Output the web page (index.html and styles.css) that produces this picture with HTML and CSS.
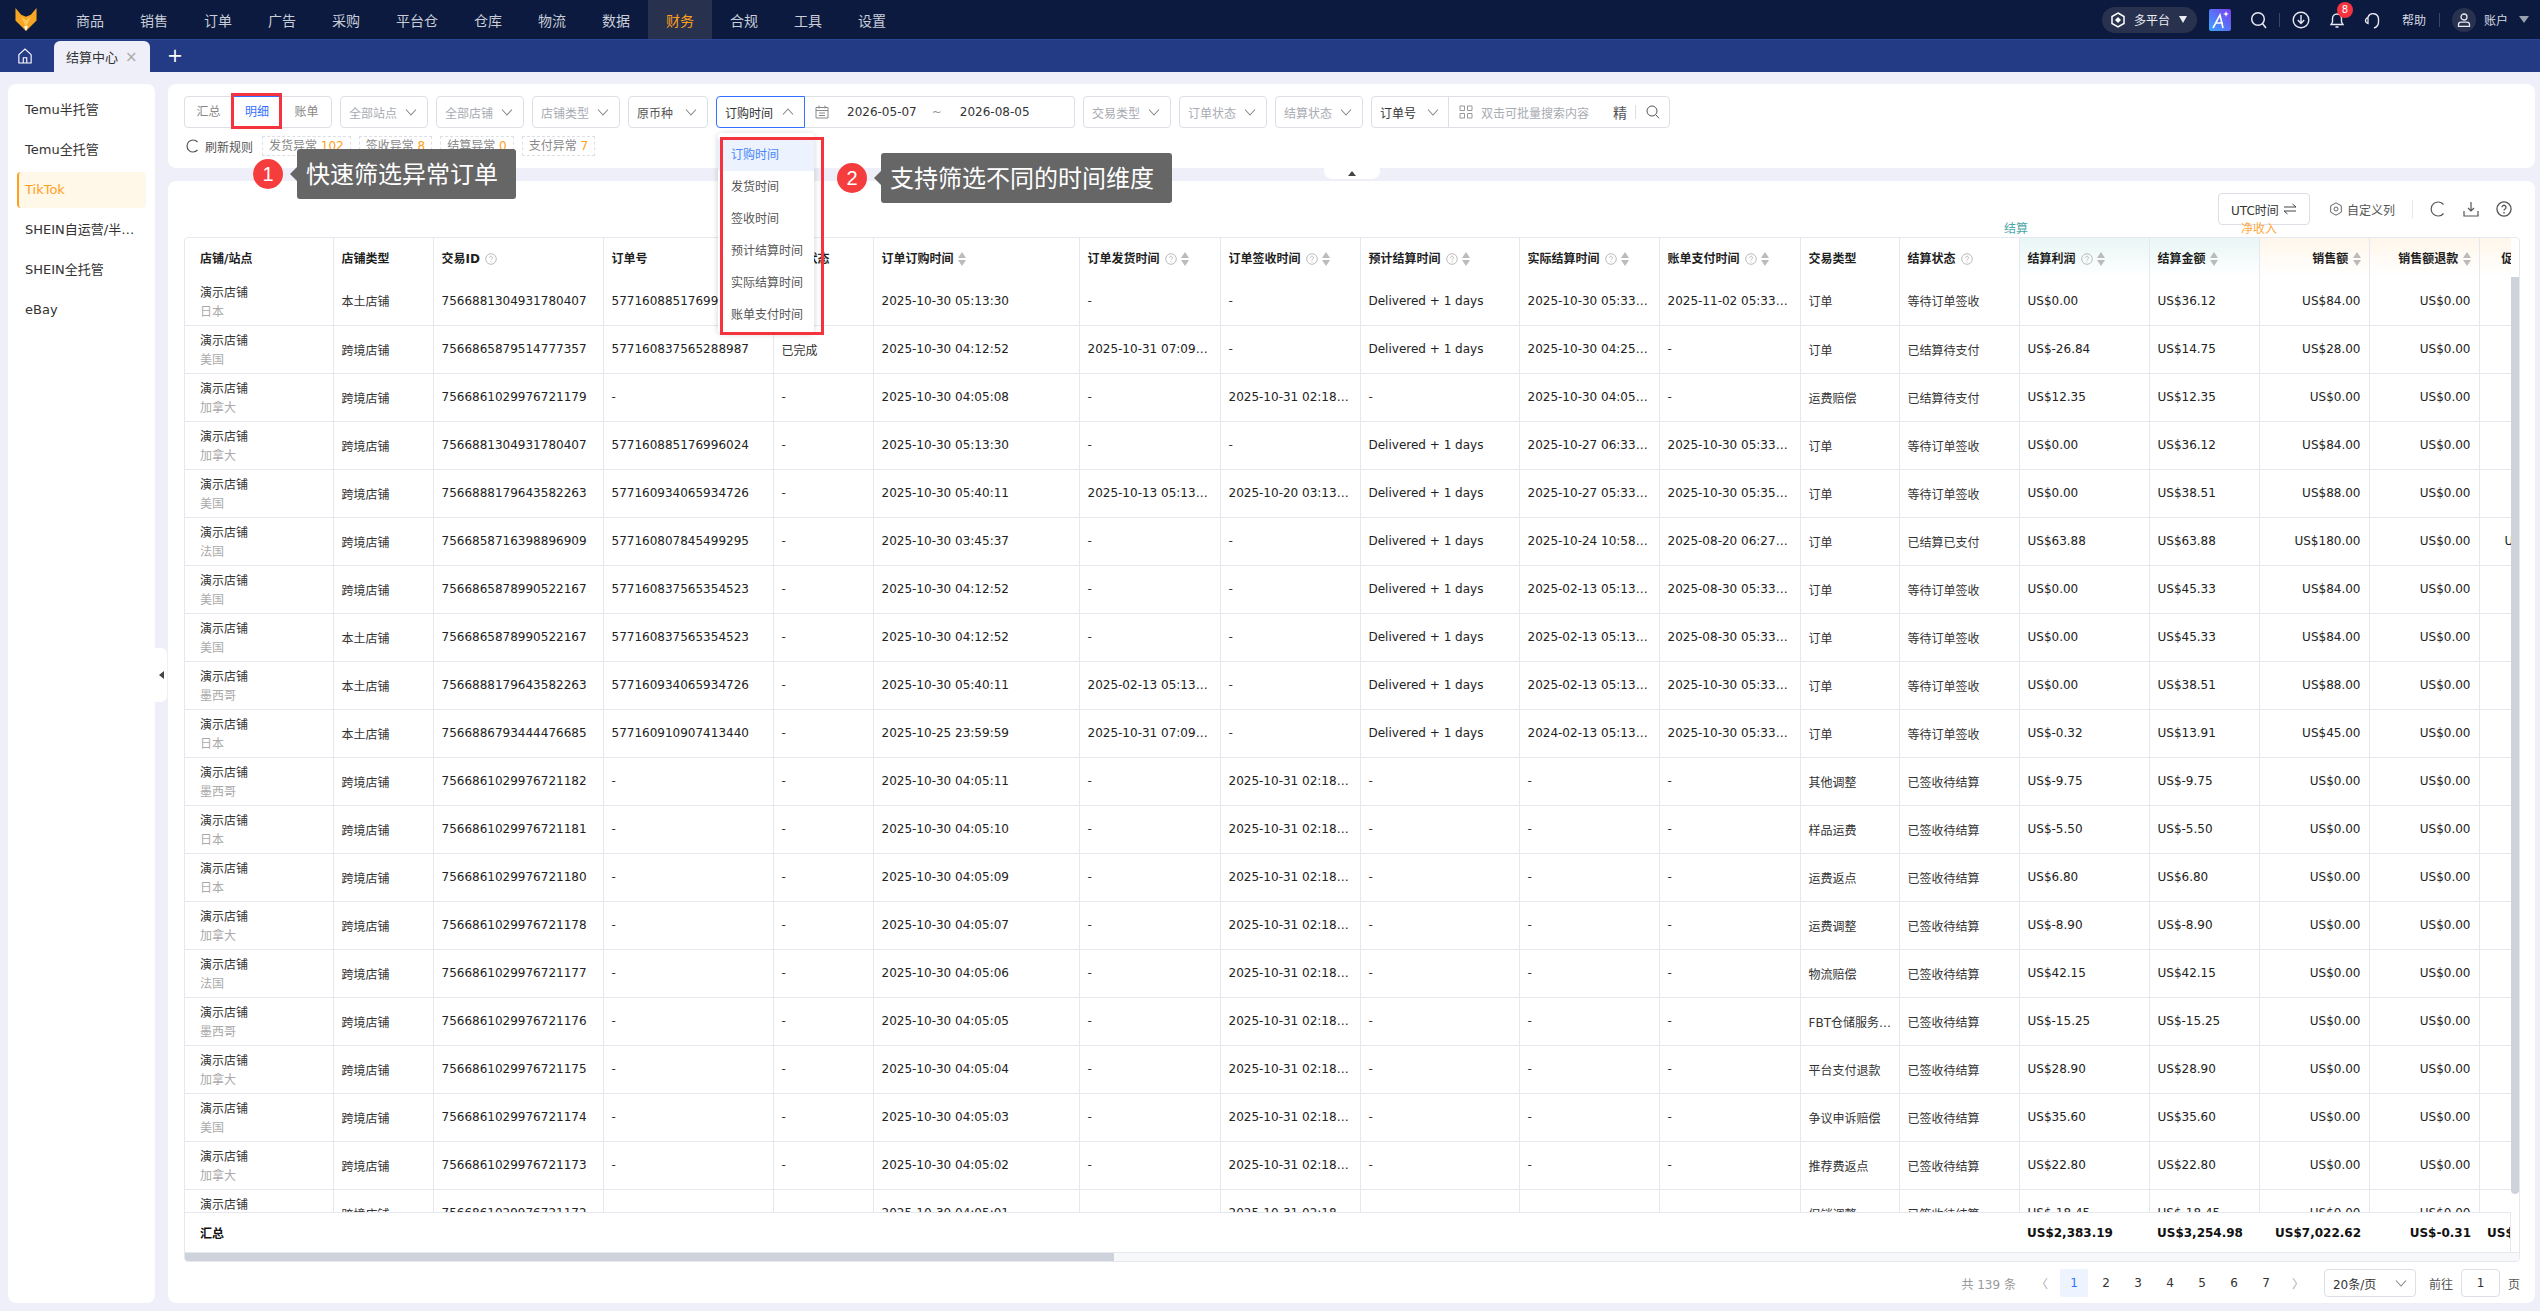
FILE: index.html
```html
<!DOCTYPE html>
<html lang="zh-CN">
<head>
    <meta charset="UTF-8">
    <meta name="viewport" content="width=device-width, initial-scale=1.0">
    <title>结算中心</title>
    <link rel="stylesheet" href="styles.css">
</head>
<body>
    <svg class="sprite" aria-hidden="true">
        <symbol id="i-chev" viewBox="0 0 12 12"><path d="M1 3.5 6 9l5-5.500" fill="none" stroke="currentColor" stroke-width="1.100"/></symbol>
        <symbol id="i-help" viewBox="0 0 12 12"><circle cx="6" cy="6" r="5.300" fill="none" stroke="currentColor"/><path d="M4.500 4.700a1.500 1.500 0 1 1 2.300 1.300c-.5.300-.8.600-.8 1.200M6 8.300v1" fill="none" stroke="currentColor"/></symbol>
        <symbol id="i-sort" viewBox="0 0 8 14"><path d="M4 0l4 6H0zM4 14 0 8h8z" fill="currentColor"/></symbol>
    </svg>

    <!-- top navigation -->
    <header class="topnav">
        <svg class="logo" viewBox="0 0 22 24"><path d="M0 0l6 7 5 2 5-2 6-7v13L11 24 0 13z" fill="#f6a623"/><path d="M6 9l5 4 5-4-5 11z" fill="#ffc65c"/><path d="M9 19h4l-2 5z" fill="#fff"/></svg>
        <nav class="nav-list">
            <a class="nav-item">商品</a>
            <a class="nav-item">销售</a>
            <a class="nav-item">订单</a>
            <a class="nav-item">广告</a>
            <a class="nav-item">采购</a>
            <a class="nav-item">平台仓</a>
            <a class="nav-item">仓库</a>
            <a class="nav-item">物流</a>
            <a class="nav-item">数据</a>
            <a class="nav-item nav-active">财务</a>
            <a class="nav-item">合规</a>
            <a class="nav-item">工具</a>
            <a class="nav-item">设置</a>
        </nav>
        <div class="nav-right">
            <div class="platform-pill">
                <svg class="icon-16" viewBox="0 0 16 16"><path d="M8 1l6 3.500v7L8 15l-6-3.500v-7z" fill="none" stroke="#fff" stroke-width="1.500"/><path d="M8 5l3 3-3 3-3-3z" fill="#fff"/></svg>
                <span>多平台</span>
                <i class="tri-down"></i>
            </div>
            <svg class="ai-logo" viewBox="0 0 22 22"><defs><linearGradient id="ai-grad" x1="0" y1="1" x2="1" y2="0"><stop offset="0" stop-color="#38a6ff"/><stop offset="1" stop-color="#7a3df0"/></linearGradient></defs><rect width="22" height="22" rx="2" fill="url(#ai-grad)"/><path d="M4 19 11 6l3 13M7 14h7" fill="none" stroke="#fff" stroke-width="1.600"/><path d="M17 2l.8 2.200L20 5l-2.200.8L17 8l-.8-2.200L14 5l2.200-.8z" fill="#fff"/></svg>
            <svg class="icon-18 search-top" viewBox="0 0 18 18"><circle cx="8" cy="8" r="6.300" fill="none" stroke="#e8eaf0" stroke-width="1.500"/><path d="M12.500 12.500 16 17" stroke="#e8eaf0" stroke-width="1.500"/></svg>
            <i class="nav-sep"></i>
            <svg class="icon-18 download-top" viewBox="0 0 18 18"><circle cx="9" cy="9" r="7.800" fill="none" stroke="#e8eaf0" stroke-width="1.400"/><path d="M9 4v8M5.800 9 9 12.500 12.200 9" fill="none" stroke="#e8eaf0" stroke-width="1.400"/></svg>
            <div class="bell">
                <svg class="icon-18" viewBox="0 0 18 18"><path d="M3 13.500h12l-1.500-2.500V7.500a4.500 4.500 0 0 0-9 0V11zM7.500 16h3" fill="none" stroke="#e8eaf0" stroke-width="1.400"/></svg>
                <span class="bell-badge">8</span>
            </div>
            <svg class="icon-18 headset" viewBox="0 0 18 18"><path d="M4 6a5.500 5.500 0 0 1 10.500 1.500v3.500c0 3-1.500 5-4.500 6" fill="none" stroke="#e8eaf0" stroke-width="1.400"/><path d="M4 6.500c-1.500.5-2.500 1.500-2.500 3s1 2.500 2.500 3z" fill="none" stroke="#e8eaf0" stroke-width="1.300"/></svg>
            <span class="help-link">帮助</span>
            <i class="nav-sep sep-help"></i>
            <span class="avatar"><svg class="icon-14" viewBox="0 0 14 14"><circle cx="7" cy="4" r="3" fill="none" stroke="#e8eaf0" stroke-width="1.300"/><path d="M1.500 13.300V11.500c0-1.500 1-2.300 2.500-2.300h6c1.500 0 2.500.8 2.500 2.300v1.800z" fill="none" stroke="#e8eaf0" stroke-width="1.300"/></svg></span>
            <span class="account-name">账户</span>
            <i class="tri-down tri-gray"></i>
        </div>
    </header>

    <!-- page tabs -->
    <div class="tabbar">
        <svg class="home-icon" viewBox="0 0 16 18"><path d="M1 7.500 8 1l7 6.500V17H1zM6 17v-6h4v6" fill="none" stroke="#fff" stroke-width="1.300"/></svg>
        <div class="tab">结算中心<span class="tab-close">×</span></div>
        <span class="tab-add">+</span>
    </div>

    <div class="layout">
        <aside class="side">
            <a class="side-item">Temu半托管</a>
            <a class="side-item">Temu全托管</a>
            <a class="side-item side-active">TikTok</a>
            <a class="side-item">SHEIN自运营/半托管</a>
            <a class="side-item">SHEIN全托管</a>
            <a class="side-item">eBay</a>
        </aside>

        <main class="main">
            <section class="filters">
                <div class="filter-row">
                    <div class="seg">
                        <span class="seg-item">汇总</span>
                        <span class="seg-item seg-on">明细</span>
                        <span class="seg-item seg-last">账单</span>
                    </div>
                    <div class="sel">全部站点<svg class="chev"><use href="#i-chev"/></svg></div>
                    <div class="sel">全部店铺<svg class="chev"><use href="#i-chev"/></svg></div>
                    <div class="sel">店铺类型<svg class="chev"><use href="#i-chev"/></svg></div>
                    <div class="sel sel-cur">原币种<svg class="chev"><use href="#i-chev"/></svg></div>
                    <div class="date-group">
                        <div class="sel sel-time">订购时间<svg class="chev chev-up"><use href="#i-chev"/></svg></div>
                        <div class="date-box">
                            <svg class="icon-14" viewBox="0 0 14 14"><path d="M1 2.500h12V13H1zM1 5.500h12M4 .5v3M10 .5v3M4 8h6M4 10.500h6" fill="none" stroke="#888" stroke-width="1"/></svg>
                            <span class="date-val">2026-05-07</span>
                            <span class="date-tilde">~</span>
                            <span class="date-val">2026-08-05</span>
                        </div>
                    </div>
                    <div class="sel">交易类型<svg class="chev"><use href="#i-chev"/></svg></div>
                    <div class="sel">订单状态<svg class="chev"><use href="#i-chev"/></svg></div>
                    <div class="sel">结算状态<svg class="chev"><use href="#i-chev"/></svg></div>
                    <div class="search-group">
                        <div class="search-type">订单号<svg class="chev"><use href="#i-chev"/></svg></div>
                        <div class="search-input">
                            <svg class="icon-14" viewBox="0 0 14 14"><path d="M1 1h4.500v4.500H1zM8.500 1H13v4.500H8.500zM1 8.500h4.500V13H1zM8.500 8.500H13V13H8.500z" fill="none" stroke="#999"/></svg>
                            <span class="search-hint">双击可批量搜索内容</span>
                            <span class="search-exact">精</span>
                            <i class="search-sep"></i>
                            <svg class="icon-14" viewBox="0 0 14 14"><circle cx="6" cy="6" r="5" fill="none" stroke="#555"/><path d="M9.700 9.700 13 13.300" stroke="#555"/></svg>
                        </div>
                    </div>
                </div>
                <div class="rule-row">
                    <svg class="icon-14 rule-icon" viewBox="0 0 14 14"><path d="M11.500 3A6 6 0 1 0 11.500 11" fill="none" stroke="#555" stroke-width="1.200"/></svg>
                    <span class="rule-text">刷新规则</span>
                    <span class="tag">发货异常 <b>102</b></span>
                    <span class="tag">签收异常 <b>8</b></span>
                    <span class="tag">结算异常 <b>0</b></span>
                    <span class="tag">支付异常 <b>7</b></span>
                </div>
            </section>

            <section class="table-panel">
                <div class="table-tools">
                    <button class="utc-btn">UTC时间 <svg class="icon-14" viewBox="0 0 14 14"><path d="M1 5h12L9.500 2M13 9H1l3.500 3" fill="none" stroke="#444"/></svg></button>
                    <span class="col-setting"><svg class="icon-14" viewBox="0 0 14 14"><path d="M7 .8l5.300 3v6.400L7 13.200l-5.300-3V3.800z" fill="none" stroke="#666"/><circle cx="7" cy="7" r="2" fill="none" stroke="#666"/></svg>自定义列</span>
                    <i class="tool-sep"></i>
                    <svg class="icon-16" viewBox="0 0 16 16"><path d="M13.500 3.500a7 7 0 1 0 0 9" fill="none" stroke="#555" stroke-width="1.200"/></svg>
                    <svg class="icon-16" viewBox="0 0 16 16"><path d="M8 1v9M5 7l3 3 3-3M1 10v5h14v-5" fill="none" stroke="#555" stroke-width="1.200"/></svg>
                    <svg class="icon-16" viewBox="0 0 12 12"><use href="#i-help" class="tool-help"/></svg>
                </div>
                <div class="group-labels">
                    <span class="group-settle">结算</span>
                    <span class="group-income">净收入</span>
                </div>
                <div class="table-box">
                    <div class="head-clip">
                        <table class="grid">
                            <colgroup><col><col><col><col><col><col><col><col><col><col><col><col><col><col><col><col><col><col></colgroup>
                            <thead>
                                <tr>
                                    <th>店铺/站点</th>
                                    <th>店铺类型</th>
                                    <th>交易ID <svg class="help"><use href="#i-help"/></svg></th>
                                    <th>订单号</th>
                                    <th>订单状态</th>
                                    <th>订单订购时间 <svg class="sort"><use href="#i-sort"/></svg></th>
                                    <th>订单发货时间 <svg class="help"><use href="#i-help"/></svg> <svg class="sort"><use href="#i-sort"/></svg></th>
                                    <th>订单签收时间 <svg class="help"><use href="#i-help"/></svg> <svg class="sort"><use href="#i-sort"/></svg></th>
                                    <th>预计结算时间 <svg class="help"><use href="#i-help"/></svg> <svg class="sort"><use href="#i-sort"/></svg></th>
                                    <th>实际结算时间 <svg class="help"><use href="#i-help"/></svg> <svg class="sort"><use href="#i-sort"/></svg></th>
                                    <th>账单支付时间 <svg class="help"><use href="#i-help"/></svg> <svg class="sort"><use href="#i-sort"/></svg></th>
                                    <th>交易类型</th>
                                    <th>结算状态 <svg class="help"><use href="#i-help"/></svg></th>
                                    <th class="th-teal">结算利润 <svg class="help"><use href="#i-help"/></svg> <svg class="sort"><use href="#i-sort"/></svg></th>
                                    <th class="th-teal">结算金额 <svg class="sort"><use href="#i-sort"/></svg></th>
                                    <th class="th-orange r">销售额 <svg class="sort"><use href="#i-sort"/></svg></th>
                                    <th class="th-orange r">销售额退款 <svg class="sort"><use href="#i-sort"/></svg></th>
                                    <th class="th-orange r">促销折扣 <svg class="sort"><use href="#i-sort"/></svg></th>
                                </tr>
                            </thead>
                        </table>
                    </div>
                    <div class="body-wrap">
                        <div class="body-clip">
                            <table class="grid">
                                <colgroup><col><col><col><col><col><col><col><col><col><col><col><col><col><col><col><col><col><col></colgroup>
                                <tbody>
                                    <tr><td class="shop">演示店铺<small>日本</small></td><td>本土店铺</td><td class="n">7566881304931780407</td><td class="n">577160885176996024</td><td>-</td><td class="n">2025-10-30 05:13:30</td><td>-</td><td>-</td><td class="n">Delivered + 1 days</td><td class="n">2025-10-30 05:33:30</td><td class="n">2025-11-02 05:33:30</td><td>订单</td><td>等待订单签收</td><td class="n">US$0.00</td><td class="n">US$36.12</td><td class="n r">US$84.00</td><td class="n r">US$0.00</td><td class="n r">US$0.00</td></tr>
                                    <tr><td class="shop">演示店铺<small>美国</small></td><td>跨境店铺</td><td class="n">7566865879514777357</td><td class="n">577160837565288987</td><td>已完成</td><td class="n">2025-10-30 04:12:52</td><td class="n">2025-10-31 07:09:12</td><td>-</td><td class="n">Delivered + 1 days</td><td class="n">2025-10-30 04:25:52</td><td>-</td><td>订单</td><td>已结算待支付</td><td class="n">US$-26.84</td><td class="n">US$14.75</td><td class="n r">US$28.00</td><td class="n r">US$0.00</td><td class="n r">US$0.00</td></tr>
                                    <tr><td class="shop">演示店铺<small>加拿大</small></td><td>跨境店铺</td><td class="n">7566861029976721179</td><td>-</td><td>-</td><td class="n">2025-10-30 04:05:08</td><td>-</td><td class="n">2025-10-31 02:18:08</td><td>-</td><td class="n">2025-10-30 04:05:08</td><td>-</td><td>运费赔偿</td><td>已结算待支付</td><td class="n">US$12.35</td><td class="n">US$12.35</td><td class="n r">US$0.00</td><td class="n r">US$0.00</td><td class="n r">US$0.00</td></tr>
                                    <tr><td class="shop">演示店铺<small>加拿大</small></td><td>跨境店铺</td><td class="n">7566881304931780407</td><td class="n">577160885176996024</td><td>-</td><td class="n">2025-10-30 05:13:30</td><td>-</td><td>-</td><td class="n">Delivered + 1 days</td><td class="n">2025-10-27 06:33:30</td><td class="n">2025-10-30 05:33:30</td><td>订单</td><td>等待订单签收</td><td class="n">US$0.00</td><td class="n">US$36.12</td><td class="n r">US$84.00</td><td class="n r">US$0.00</td><td class="n r">US$0.00</td></tr>
                                    <tr><td class="shop">演示店铺<small>美国</small></td><td>跨境店铺</td><td class="n">7566888179643582263</td><td class="n">577160934065934726</td><td>-</td><td class="n">2025-10-30 05:40:11</td><td class="n">2025-10-13 05:13:11</td><td class="n">2025-10-20 03:13:11</td><td class="n">Delivered + 1 days</td><td class="n">2025-10-27 05:33:11</td><td class="n">2025-10-30 05:35:11</td><td>订单</td><td>等待订单签收</td><td class="n">US$0.00</td><td class="n">US$38.51</td><td class="n r">US$88.00</td><td class="n r">US$0.00</td><td class="n r">US$0.00</td></tr>
                                    <tr><td class="shop">演示店铺<small>法国</small></td><td>跨境店铺</td><td class="n">7566858716398896909</td><td class="n">577160807845499295</td><td>-</td><td class="n">2025-10-30 03:45:37</td><td>-</td><td>-</td><td class="n">Delivered + 1 days</td><td class="n">2025-10-24 10:58:37</td><td class="n">2025-08-20 06:27:37</td><td>订单</td><td>已结算已支付</td><td class="n">US$63.88</td><td class="n">US$63.88</td><td class="n r">US$180.00</td><td class="n r">US$0.00</td><td class="n r">US$120.00</td></tr>
                                    <tr><td class="shop">演示店铺<small>美国</small></td><td>跨境店铺</td><td class="n">7566865878990522167</td><td class="n">577160837565354523</td><td>-</td><td class="n">2025-10-30 04:12:52</td><td>-</td><td>-</td><td class="n">Delivered + 1 days</td><td class="n">2025-02-13 05:13:52</td><td class="n">2025-08-30 05:33:52</td><td>订单</td><td>等待订单签收</td><td class="n">US$0.00</td><td class="n">US$45.33</td><td class="n r">US$84.00</td><td class="n r">US$0.00</td><td class="n r">US$0.00</td></tr>
                                    <tr><td class="shop">演示店铺<small>美国</small></td><td>本土店铺</td><td class="n">7566865878990522167</td><td class="n">577160837565354523</td><td>-</td><td class="n">2025-10-30 04:12:52</td><td>-</td><td>-</td><td class="n">Delivered + 1 days</td><td class="n">2025-02-13 05:13:52</td><td class="n">2025-08-30 05:33:52</td><td>订单</td><td>等待订单签收</td><td class="n">US$0.00</td><td class="n">US$45.33</td><td class="n r">US$84.00</td><td class="n r">US$0.00</td><td class="n r">US$0.00</td></tr>
                                    <tr><td class="shop">演示店铺<small>墨西哥</small></td><td>本土店铺</td><td class="n">7566888179643582263</td><td class="n">577160934065934726</td><td>-</td><td class="n">2025-10-30 05:40:11</td><td class="n">2025-02-13 05:13:11</td><td>-</td><td class="n">Delivered + 1 days</td><td class="n">2025-02-13 05:13:11</td><td class="n">2025-10-30 05:33:11</td><td>订单</td><td>等待订单签收</td><td class="n">US$0.00</td><td class="n">US$38.51</td><td class="n r">US$88.00</td><td class="n r">US$0.00</td><td class="n r">US$0.00</td></tr>
                                    <tr><td class="shop">演示店铺<small>日本</small></td><td>本土店铺</td><td class="n">7566886793444476685</td><td class="n">577160910907413440</td><td>-</td><td class="n">2025-10-25 23:59:59</td><td class="n">2025-10-31 07:09:59</td><td>-</td><td class="n">Delivered + 1 days</td><td class="n">2024-02-13 05:13:59</td><td class="n">2025-10-30 05:33:59</td><td>订单</td><td>等待订单签收</td><td class="n">US$-0.32</td><td class="n">US$13.91</td><td class="n r">US$45.00</td><td class="n r">US$0.00</td><td class="n r">US$0.00</td></tr>
                                    <tr><td class="shop">演示店铺<small>墨西哥</small></td><td>跨境店铺</td><td class="n">7566861029976721182</td><td>-</td><td>-</td><td class="n">2025-10-30 04:05:11</td><td>-</td><td class="n">2025-10-31 02:18:11</td><td>-</td><td>-</td><td>-</td><td>其他调整</td><td>已签收待结算</td><td class="n">US$-9.75</td><td class="n">US$-9.75</td><td class="n r">US$0.00</td><td class="n r">US$0.00</td><td class="n r">US$0.00</td></tr>
                                    <tr><td class="shop">演示店铺<small>日本</small></td><td>跨境店铺</td><td class="n">7566861029976721181</td><td>-</td><td>-</td><td class="n">2025-10-30 04:05:10</td><td>-</td><td class="n">2025-10-31 02:18:10</td><td>-</td><td>-</td><td>-</td><td>样品运费</td><td>已签收待结算</td><td class="n">US$-5.50</td><td class="n">US$-5.50</td><td class="n r">US$0.00</td><td class="n r">US$0.00</td><td class="n r">US$0.00</td></tr>
                                    <tr><td class="shop">演示店铺<small>日本</small></td><td>跨境店铺</td><td class="n">7566861029976721180</td><td>-</td><td>-</td><td class="n">2025-10-30 04:05:09</td><td>-</td><td class="n">2025-10-31 02:18:09</td><td>-</td><td>-</td><td>-</td><td>运费返点</td><td>已签收待结算</td><td class="n">US$6.80</td><td class="n">US$6.80</td><td class="n r">US$0.00</td><td class="n r">US$0.00</td><td class="n r">US$0.00</td></tr>
                                    <tr><td class="shop">演示店铺<small>加拿大</small></td><td>跨境店铺</td><td class="n">7566861029976721178</td><td>-</td><td>-</td><td class="n">2025-10-30 04:05:07</td><td>-</td><td class="n">2025-10-31 02:18:07</td><td>-</td><td>-</td><td>-</td><td>运费调整</td><td>已签收待结算</td><td class="n">US$-8.90</td><td class="n">US$-8.90</td><td class="n r">US$0.00</td><td class="n r">US$0.00</td><td class="n r">US$0.00</td></tr>
                                    <tr><td class="shop">演示店铺<small>法国</small></td><td>跨境店铺</td><td class="n">7566861029976721177</td><td>-</td><td>-</td><td class="n">2025-10-30 04:05:06</td><td>-</td><td class="n">2025-10-31 02:18:06</td><td>-</td><td>-</td><td>-</td><td>物流赔偿</td><td>已签收待结算</td><td class="n">US$42.15</td><td class="n">US$42.15</td><td class="n r">US$0.00</td><td class="n r">US$0.00</td><td class="n r">US$0.00</td></tr>
                                    <tr><td class="shop">演示店铺<small>墨西哥</small></td><td>跨境店铺</td><td class="n">7566861029976721176</td><td>-</td><td>-</td><td class="n">2025-10-30 04:05:05</td><td>-</td><td class="n">2025-10-31 02:18:05</td><td>-</td><td>-</td><td>-</td><td>FBT仓储服务费用</td><td>已签收待结算</td><td class="n">US$-15.25</td><td class="n">US$-15.25</td><td class="n r">US$0.00</td><td class="n r">US$0.00</td><td class="n r">US$0.00</td></tr>
                                    <tr><td class="shop">演示店铺<small>加拿大</small></td><td>跨境店铺</td><td class="n">7566861029976721175</td><td>-</td><td>-</td><td class="n">2025-10-30 04:05:04</td><td>-</td><td class="n">2025-10-31 02:18:04</td><td>-</td><td>-</td><td>-</td><td>平台支付退款</td><td>已签收待结算</td><td class="n">US$28.90</td><td class="n">US$28.90</td><td class="n r">US$0.00</td><td class="n r">US$0.00</td><td class="n r">US$0.00</td></tr>
                                    <tr><td class="shop">演示店铺<small>美国</small></td><td>跨境店铺</td><td class="n">7566861029976721174</td><td>-</td><td>-</td><td class="n">2025-10-30 04:05:03</td><td>-</td><td class="n">2025-10-31 02:18:03</td><td>-</td><td>-</td><td>-</td><td>争议申诉赔偿</td><td>已签收待结算</td><td class="n">US$35.60</td><td class="n">US$35.60</td><td class="n r">US$0.00</td><td class="n r">US$0.00</td><td class="n r">US$0.00</td></tr>
                                    <tr><td class="shop">演示店铺<small>加拿大</small></td><td>跨境店铺</td><td class="n">7566861029976721173</td><td>-</td><td>-</td><td class="n">2025-10-30 04:05:02</td><td>-</td><td class="n">2025-10-31 02:18:02</td><td>-</td><td>-</td><td>-</td><td>推荐费返点</td><td>已签收待结算</td><td class="n">US$22.80</td><td class="n">US$22.80</td><td class="n r">US$0.00</td><td class="n r">US$0.00</td><td class="n r">US$0.00</td></tr>
                                    <tr><td class="shop">演示店铺<small>加拿大</small></td><td>跨境店铺</td><td class="n">7566861029976721172</td><td>-</td><td>-</td><td class="n">2025-10-30 04:05:01</td><td>-</td><td class="n">2025-10-31 02:18:01</td><td>-</td><td>-</td><td>-</td><td>促销调整</td><td>已签收待结算</td><td class="n">US$-18.45</td><td class="n">US$-18.45</td><td class="n r">US$0.00</td><td class="n r">US$0.00</td><td class="n r">US$0.00</td></tr>
                                </tbody>
                            </table>
                        </div>
                        <div class="vbar"><div class="vbar-thumb"></div></div>
                    </div>
                    <div class="foot-clip">
                        <table class="grid grid-foot">
                            <colgroup><col><col><col><col><col><col><col><col><col><col><col><col><col><col><col><col><col><col></colgroup>
                            <tfoot>
                                <tr><td class="foot-title">汇总</td><td></td><td></td><td></td><td></td><td></td><td></td><td></td><td></td><td></td><td></td><td></td><td></td><td>US$2,383.19</td><td>US$3,254.98</td><td class="r">US$7,022.62</td><td class="r">US$-0.31</td><td class="r">US$1,024.50</td></tr>
                            </tfoot>
                        </table>
                    </div>
                    <div class="hbar"><div class="hbar-thumb"></div></div>
                </div>
                <div class="pager">
                    <span class="pager-total">共 139 条</span>
                    <span class="page-arrow">〈</span>
                    <span class="page-num page-on">1</span>
                    <span class="page-num">2</span>
                    <span class="page-num">3</span>
                    <span class="page-num">4</span>
                    <span class="page-num">5</span>
                    <span class="page-num">6</span>
                    <span class="page-num">7</span>
                    <span class="page-arrow">〉</span>
                    <div class="page-size">20条/页<svg class="chev"><use href="#i-chev"/></svg></div>
                    <span class="page-label">前往</span>
                    <span class="page-input">1</span>
                    <span class="page-label">页</span>
                </div>
            </section>
        </main>
    </div>

    <!-- things lying over the page -->
    <div class="side-handle"><i class="tri-left"></i></div>
    <div class="filter-handle"><i class="tri-up"></i></div>

    <div class="time-menu">
        <div class="time-item time-on">订购时间</div>
        <div class="time-item">发货时间</div>
        <div class="time-item">签收时间</div>
        <div class="time-item">预计结算时间</div>
        <div class="time-item">实际结算时间</div>
        <div class="time-item">账单支付时间</div>
    </div>

    <div class="red-box red-seg"></div>
    <div class="red-box red-menu"></div>

    <div class="callout callout-one">
        <span class="callout-num">1</span>
        <span class="callout-text">快速筛选异常订单</span>
    </div>
    <div class="callout callout-two">
        <span class="callout-num">2</span>
        <span class="callout-text">支持筛选不同的时间维度</span>
    </div>
</body>
</html>
```

FILE: styles.css
```css
* {
    box-sizing: border-box;
}
body {
    position: relative;
    margin: 0;
    width: 2540px;
    height: 1311px;
    overflow: hidden;
    background: #eeeff8;
    color: #333;
    font-family: "DejaVu Sans", "Noto Sans CJK SC", sans-serif;
    font-size: 12px;
}
.sprite {
    position: absolute;
    width: 0;
    height: 0;
}
.icon-14 {
    width: 14px;
    height: 14px;
    flex: none;
}
.icon-16 {
    width: 16px;
    height: 16px;
    flex: none;
}
.icon-18 {
    width: 18px;
    height: 18px;
    flex: none;
}

/* top navigation */
.topnav {
    display: flex;
    align-items: center;
    height: 40px;
    padding-left: 15px;
    background: #0b1a3e;
    border-bottom: 1px solid #2d4596;
}
.logo {
    width: 22px;
    height: 23px;
    flex: none;
}
.nav-list {
    display: flex;
    margin-left: 21px;
    height: 39px;
}
.nav-item {
    display: flex;
    align-items: center;
    padding: 0 18px;
    color: #c9cdd8;
    font-size: 14px;
}
.nav-active {
    background: #28324f;
    color: #ff9f1c;
}
.nav-right {
    display: flex;
    align-items: center;
    margin-left: auto;
    padding-right: 11px;
    color: #d5d8e0;
    white-space: nowrap;
}
.platform-pill {
    display: flex;
    align-items: center;
    width: 95px;
    height: 26px;
    padding: 0 8px;
    gap: 8px;
    border-radius: 13px;
    background: #28324f;
    color: #eceef3;
}
.tri-down {
    width: 0;
    height: 0;
    margin-left: 1px;
    border-left: 4px solid transparent;
    border-right: 4px solid transparent;
    border-top: 7px solid #eceef3;
}
.tri-gray {
    margin-left: 11px;
    border-left-width: 5px;
    border-right-width: 5px;
    border-top-color: #9aa0ae;
}
.ai-logo {
    width: 22px;
    height: 22px;
    margin-left: 12px;
}
.search-top {
    margin-left: 19px;
}
.nav-sep {
    width: 1px;
    height: 14px;
    margin-left: 11px;
    background: #3a4560;
}
.download-top {
    margin-left: 12px;
}
.bell {
    position: relative;
    display: flex;
    margin-left: 18px;
}
.bell-badge {
    position: absolute;
    top: -9px;
    left: 9px;
    width: 16px;
    height: 16px;
    border-radius: 8px;
    background: #f5333f;
    color: #fff;
    font-size: 10px;
    line-height: 16px;
    text-align: center;
}
.headset {
    margin-left: 18px;
}
.help-link {
    margin-left: 20px;
}
.sep-help {
    margin-left: 13px;
}
.avatar {
    display: flex;
    align-items: center;
    justify-content: center;
    width: 24px;
    height: 24px;
    margin-left: 12px;
    border-radius: 12px;
    background: #28324f;
}
.account-name {
    margin-left: 8px;
}

/* tabs */
.tabbar {
    display: flex;
    align-items: flex-end;
    height: 32px;
    padding-left: 18px;
    background: #233a85;
}
.home-icon {
    width: 14px;
    height: 18px;
    margin-bottom: 7px;
}
.tab {
    display: flex;
    align-items: center;
    width: 96px;
    height: 31px;
    margin-left: 22px;
    padding-left: 12px;
    border-radius: 6px 6px 0 0;
    background: #eeeff8;
    color: #333;
    font-size: 13px;
}
.tab-close {
    margin-left: 7px;
    color: #aaa;
    font-size: 15px;
}
.tab-add {
    margin: 0 0 4px 17px;
    color: #fff;
    font-size: 19px;
    line-height: 26px;
}

/* page body */
.layout {
    display: flex;
    gap: 13px;
    height: 1239px;
    padding: 12px 5px 8px 8px;
}
.side {
    width: 147px;
    flex: none;
    padding: 8px 9px;
    border-radius: 8px;
    background: #fff;
}
.side-item {
    display: block;
    height: 36px;
    margin-bottom: 4px;
    padding: 0 6px 0 8px;
    overflow: hidden;
    color: #333;
    font-size: 13px;
    line-height: 36px;
    white-space: nowrap;
    text-overflow: ellipsis;
}
.side-active {
    border-left: 2px solid #ff9f1c;
    border-radius: 4px;
    padding-left: 6px;
    background: #fff7e8;
    color: #ff9f1c;
}
.main {
    display: flex;
    flex-direction: column;
    flex: 1;
    gap: 13px;
    min-width: 0;
}

/* filter panel */
.filters {
    height: 84px;
    padding: 12px 16px;
    border-radius: 8px;
    background: #fff;
}
.filter-row {
    display: flex;
    gap: 8px;
}
.seg {
    display: flex;
    width: 148px;
    height: 32px;
    border: 1px solid #dcdfe6;
    border-radius: 4px;
    color: #888;
}
.seg-item {
    width: 47px;
    line-height: 30px;
    text-align: center;
}
.seg-on {
    width: 50px;
    margin: -1px 0;
    border: 1px solid #3370ff;
    color: #3370ff;
    line-height: 30px;
}
.seg-last {
    flex: 1;
}
.sel {
    display: flex;
    align-items: center;
    justify-content: space-between;
    width: 88px;
    height: 32px;
    padding: 0 10px 0 8px;
    border: 1px solid #dcdfe6;
    border-radius: 4px;
    color: #a8abb2;
}
.sel-cur {
    width: 80px;
    color: #555;
}
.sel-time {
    width: 89px;
    border-color: #3370ff;
    border-radius: 4px 0 0 4px;
    color: #333;
}
.chev {
    width: 12px;
    height: 12px;
    flex: none;
    color: #888;
}
.chev-up {
    transform: rotate(180deg);
}
.date-group {
    display: flex;
}
.date-box {
    display: flex;
    align-items: center;
    width: 270px;
    height: 32px;
    padding-left: 10px;
    border: 1px solid #dcdfe6;
    border-left: none;
    border-radius: 0 4px 4px 0;
    color: #333;
    white-space: nowrap;
}
.date-val {
    margin-left: 18px;
}
.date-val + .date-tilde + .date-val {
    margin-left: 18px;
}
.date-tilde {
    margin-left: 15px;
    color: #999;
}
.search-group {
    display: flex;
    width: 299px;
    height: 32px;
    border: 1px solid #dcdfe6;
    border-radius: 4px;
}
.search-type {
    display: flex;
    align-items: center;
    justify-content: space-between;
    width: 77px;
    padding: 0 9px 0 8px;
    border-right: 1px solid #dcdfe6;
}
.search-input {
    display: flex;
    align-items: center;
    flex: 1;
    padding: 0 9px 0 10px;
}
.search-hint {
    flex: 1;
    margin-left: 8px;
    color: #a8abb2;
}
.search-exact {
    color: #555;
    font-size: 14px;
}
.search-sep {
    width: 1px;
    height: 14px;
    margin: 0 10px 0 8px;
    background: #dcdfe6;
}
.rule-row {
    display: flex;
    align-items: center;
    height: 20px;
    margin-top: 8px;
    padding-left: 2px;
}
.rule-text {
    margin: 0 9px 0 5px;
    color: #555;
}
.rule-icon {
    margin-left: 0;
}
.tag {
    height: 20px;
    margin-right: 8px;
    padding: 0 6px;
    border: 1px dashed #dcdfe6;
    color: #888;
    line-height: 18px;
    white-space: nowrap;
}
.tag b {
    color: #ff9f1c;
    font-weight: 400;
}

/* table panel */
.table-panel {
    flex: 1;
    min-height: 0;
    padding: 12px 15px 0 16px;
    border-radius: 8px;
    background: #fff;
}
.table-tools {
    display: flex;
    align-items: center;
    justify-content: flex-end;
    gap: 17px;
    height: 32px;
    padding-right: 8px;
    color: #555;
}
.utc-btn {
    display: flex;
    align-items: center;
    justify-content: center;
    gap: 4px;
    width: 92px;
    height: 32px;
    margin-right: 2px;
    border: 1px solid #dcdfe6;
    border-radius: 4px;
    background: #fff;
    color: #333;
    font: inherit;
}
.col-setting {
    display: flex;
    align-items: center;
    gap: 4px;
}
.tool-sep {
    width: 1px;
    height: 18px;
    background: #e4e7ed;
}
.tool-help {
    color: #555;
}
.group-labels {
    display: flex;
    height: 12px;
    line-height: 8px;
}
.group-settle {
    margin-left: 1820px;
    color: #4aa8a8;
}
.group-income {
    margin-left: 213px;
    color: #ffa940;
}
.table-box {
    display: flex;
    flex-direction: column;
    height: 1025px;
    border: 1px solid #e6e8ef;
    border-radius: 4px;
    overflow: hidden;
}
.head-clip {
    flex: none;
    height: 39px;
    margin-right: 8px;
    overflow: hidden;
}
.body-wrap {
    display: flex;
    flex: 1;
    min-height: 0;
}
.body-clip {
    flex: 1;
    min-width: 0;
    overflow: hidden;
}
.vbar {
    width: 8px;
    flex: none;
}
.vbar-thumb {
    height: 917px;
    border-radius: 0 0 4px 4px;
    background: #ced2da;
}
.foot-clip {
    flex: none;
    height: 40px;
    margin-right: 8px;
    overflow: hidden;
    border-top: 1px solid #e6e8ef;
    border-right: 1px solid #e6e8ef;
}
.hbar {
    flex: none;
    height: 9px;
    border-top: 1px solid #e6e8ef;
    background: #f7f8fa;
}
.hbar-thumb {
    width: 929px;
    height: 8px;
    background: #ced2da;
}

/* table grid, all three parts share these columns */
.grid {
    width: 2394px;
    table-layout: fixed;
    border-collapse: collapse;
}
.grid col:nth-child(1) { width: 148px; }
.grid col:nth-child(2) { width: 100px; }
.grid col:nth-child(3) { width: 170px; }
.grid col:nth-child(4) { width: 170px; }
.grid col:nth-child(5) { width: 100px; }
.grid col:nth-child(6) { width: 206px; }
.grid col:nth-child(7) { width: 141px; }
.grid col:nth-child(8) { width: 140px; }
.grid col:nth-child(9) { width: 159px; }
.grid col:nth-child(10) { width: 140px; }
.grid col:nth-child(11) { width: 141px; }
.grid col:nth-child(12) { width: 99px; }
.grid col:nth-child(13) { width: 120px; }
.grid col:nth-child(14) { width: 130px; }
.grid col:nth-child(15) { width: 110px; }
.grid col:nth-child(16) { width: 110px; }
.grid col:nth-child(17) { width: 110px; }
.grid col:nth-child(18) { width: 100px; }
.grid th {
    height: 39px;
    padding: 0 8px;
    border-right: 1px solid #e6e8ef;
    border-bottom: 1px solid #e6e8ef;
    color: #1f1f1f;
    font-weight: 700;
    text-align: left;
    white-space: nowrap;
    overflow: hidden;
}
.grid th:last-child {
    padding-right: 17px;
}
.grid td {
    height: 48px;
    padding: 0 8px;
    border-right: 1px solid #e6e8ef;
    border-bottom: 1px solid #e6e8ef;
    color: #333;
    white-space: nowrap;
    overflow: hidden;
    text-overflow: ellipsis;
}
.grid th:first-child,
.grid .shop,
.grid .foot-title {
    padding-left: 15px;
}
.grid td:nth-child(12) {
    padding-right: 5px;
}
.grid .n {
    color: #222;
}
.grid .r {
    text-align: right;
}
.th-teal {
    background: linear-gradient(#e8f6f5, #fff);
}
.th-orange {
    background: linear-gradient(#fff6ea, #fff);
}
.grid .shop {
    padding-top: 4px;
    line-height: 19px;
}
.shop small {
    display: block;
    color: #aaa;
    font-size: 12px;
}
.help {
    width: 12px;
    height: 12px;
    margin-left: 1px;
    color: #bbb;
    font-weight: 400;
    vertical-align: -2px;
}
.sort {
    width: 8px;
    height: 14px;
    color: #bbb;
    vertical-align: -3px;
}
.grid-foot td {
    height: 39px;
    border-right: none;
    border-bottom: none;
    color: #111;
    font-weight: 700;
    overflow: visible;
}

/* pagination */
.pager {
    display: flex;
    align-items: center;
    justify-content: flex-end;
    height: 28px;
    margin-top: 7px;
    color: #333;
}
.pager-total {
    margin-right: 10px;
    color: #999;
}
.page-arrow {
    width: 32px;
    color: #aaa;
    text-align: center;
}
.page-num {
    width: 28px;
    height: 28px;
    margin: 0 2px;
    border-radius: 2px;
    line-height: 28px;
    text-align: center;
}
.page-on {
    background: #eef4ff;
    color: #3370ff;
}
.page-size {
    display: flex;
    align-items: center;
    justify-content: space-between;
    width: 92px;
    height: 28px;
    margin: 0 13px 0 10px;
    padding: 0 8px;
    border: 1px solid #dcdfe6;
    border-radius: 4px;
}
.page-label {
    color: #555;
}
.page-input {
    width: 39px;
    height: 28px;
    margin: 0 8px;
    border: 1px solid #dcdfe6;
    border-radius: 4px;
    line-height: 26px;
    text-align: center;
}

/* overlays */
.side-handle {
    position: absolute;
    left: 155px;
    top: 648px;
    display: flex;
    align-items: center;
    justify-content: center;
    width: 12px;
    height: 54px;
    border-radius: 0 6px 6px 0;
    background: #fff;
}
.tri-left {
    width: 0;
    height: 0;
    border-top: 4px solid transparent;
    border-bottom: 4px solid transparent;
    border-right: 5px solid #444;
}
.filter-handle {
    position: absolute;
    left: 1324px;
    top: 168px;
    display: flex;
    align-items: center;
    justify-content: center;
    width: 56px;
    height: 11px;
    border-radius: 0 0 8px 8px;
    background: #fff;
}
.tri-up {
    width: 0;
    height: 0;
    border-left: 4px solid transparent;
    border-right: 4px solid transparent;
    border-bottom: 5px solid #444;
}
.time-menu {
    position: absolute;
    left: 718px;
    top: 133px;
    width: 96px;
    height: 200px;
    padding: 6px 0;
    border-radius: 4px;
    background: #fff;
    box-shadow: 0 1px 6px rgba(0, 0, 0, 0.18);
}
.time-item {
    height: 32px;
    padding-left: 13px;
    color: #555;
    line-height: 32px;
    white-space: nowrap;
}
.time-on {
    background: #ecf3ff;
    color: #4a86f7;
}
.red-box {
    position: absolute;
    border: 3px solid #f5333f;
}
.red-seg {
    left: 231px;
    top: 93px;
    width: 51px;
    height: 36px;
}
.red-menu {
    left: 720px;
    top: 137px;
    width: 104px;
    height: 198px;
}
.callout {
    position: absolute;
    display: flex;
    align-items: center;
    gap: 14px;
    height: 50px;
}
.callout-one {
    left: 253px;
    top: 149px;
}
.callout-two {
    left: 837px;
    top: 153px;
}
.callout-num {
    width: 30px;
    height: 30px;
    border-radius: 15px;
    background: #f53d3d;
    color: #fff;
    font-family: "Liberation Sans", sans-serif;
    font-size: 20px;
    line-height: 30px;
    text-align: center;
}
.callout-text {
    position: relative;
    height: 50px;
    padding: 0 18px 0 9px;
    border-radius: 3px;
    background: #666;
    color: #fff;
    font-family: "Noto Sans CJK SC", sans-serif;
    font-size: 24px;
    line-height: 48px;
    white-space: nowrap;
}
.callout-text::before {
    content: "";
    position: absolute;
    left: -7px;
    top: 18px;
    border-top: 7px solid transparent;
    border-bottom: 7px solid transparent;
    border-right: 7px solid #666;
}
```
